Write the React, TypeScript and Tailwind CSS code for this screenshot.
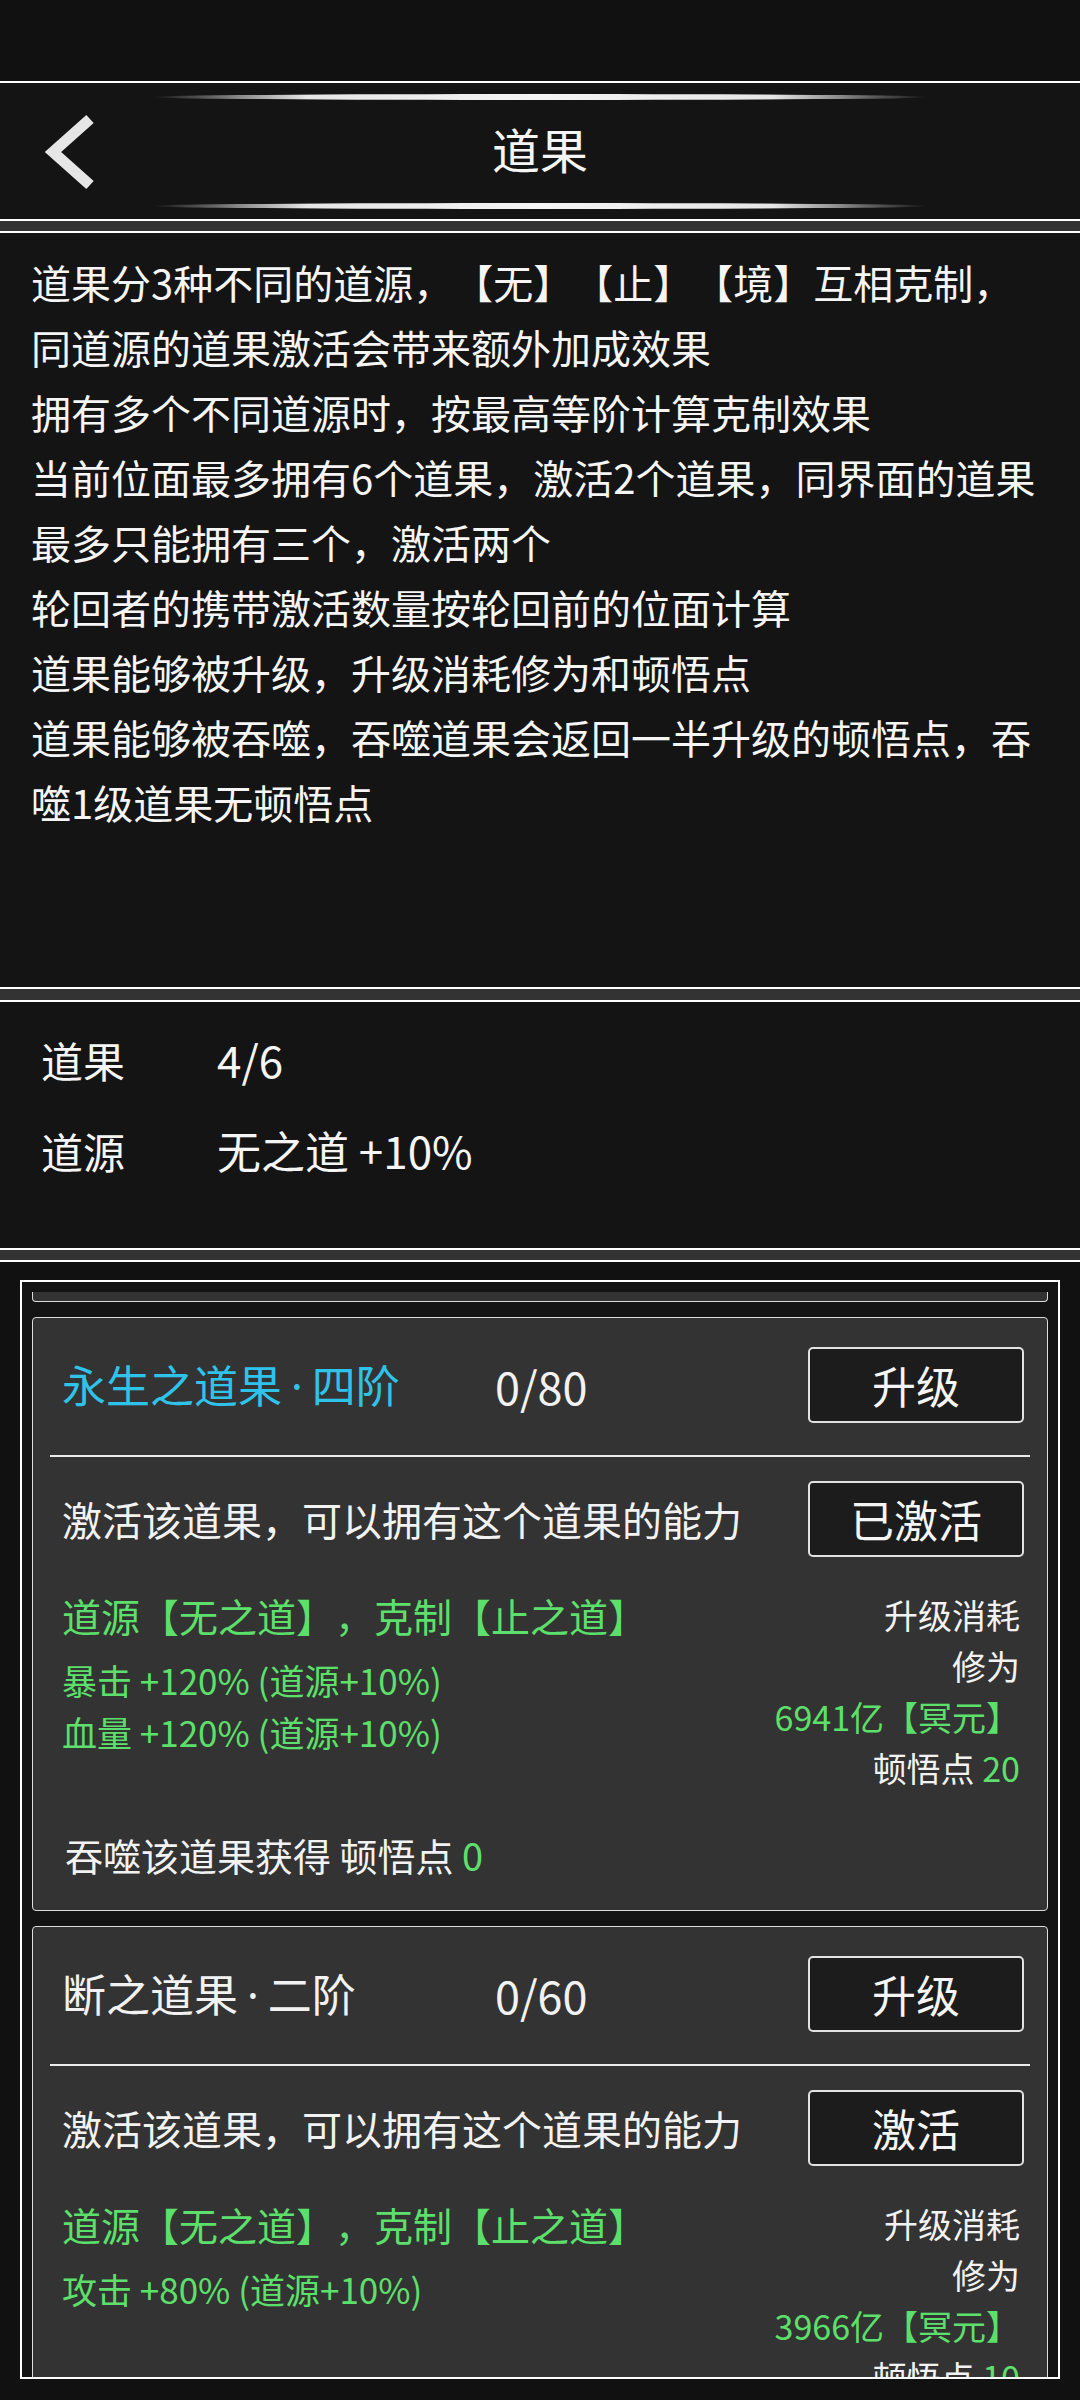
import React from 'react';

const GREEN = 'text-[#5de06b]';

type Card = {
  name: string;
  tier: string;
  titleCls: string;
  count: string;
  action: string;
  stats: string[];
  cost: string;
  insight: string;
  swallow?: string;
};

const cards: Card[] = [
  {
    name: '永生之道果',
    tier: '四阶',
    titleCls: 'text-[#2fc3ea]',
    count: '0/80',
    action: '已激活',
    stats: ['暴击 +120% (道源+10%)', '血量 +120% (道源+10%)'],
    cost: '6941亿【冥元】',
    insight: '20',
    swallow: '0',
  },
  {
    name: '断之道果',
    tier: '二阶',
    titleCls: 'text-[#f2f2f2]',
    count: '0/60',
    action: '激活',
    stats: ['攻击 +80% (道源+10%)'],
    cost: '3966亿【冥元】',
    insight: '10',
    swallow: '0',
  },
];

const rules = [
  '道果分3种不同的道源，【无】【止】【境】互相克制，',
  '同道源的道果激活会带来额外加成效果',
  '拥有多个不同道源时，按最高等阶计算克制效果',
  '当前位面最多拥有6个道果，激活2个道果，同界面的道果',
  '最多只能拥有三个，激活两个',
  '轮回者的携带激活数量按轮回前的位面计算',
  '道果能够被升级，升级消耗修为和顿悟点',
  '道果能够被吞噬，吞噬道果会返回一半升级的顿悟点，吞',
  '噬1级道果无顿悟点',
];

function GlowLine() {
  return (
    <div className="mx-auto h-[6px] w-[778px] rounded-[50%] bg-[linear-gradient(to_right,transparent,#5a5a5a_7%,#e6e6e6_20%,#f4f4f4_50%,#e6e6e6_80%,#5a5a5a_93%,transparent)]" />
  );
}

function Button({ label }: { label: string }) {
  return (
    <div className="ml-auto flex h-[76px] w-[216px] shrink-0 items-center justify-center rounded-[5px] border-2 border-[#e2e2e2] bg-[#1c1c1c] text-[44px] leading-none text-[#f5f5f5]">
      {label}
    </div>
  );
}

function FruitCard({ card }: { card: Card }) {
  return (
    <div className="shrink-0 rounded-[4px] border border-[#dcdcdc] bg-[#333333]">
      {/* title row */}
      <div className="flex items-center pl-[29px] pr-[23px] pt-[29px]">
        <div className={`w-[433px] text-[44px] leading-none ${card.titleCls}`}>
          {card.name}
          <span className="px-[9px] font-['Noto_Sans',sans-serif]">·</span>
          {card.tier}
        </div>
        <div className="text-[45px] leading-none text-[#f2f2f2]">{card.count}</div>
        <Button label="升级" />
      </div>

      <div className="mx-[17px] mt-[32px] h-[2px] bg-[#ececec]" />

      {/* activate row */}
      <div className="mt-[24px] flex items-center pl-[29px] pr-[23px]">
        <div className="text-[40px] leading-none text-[#f2f2f2]">激活该道果，可以拥有这个道果的能力</div>
        <Button label={card.action} />
      </div>

      {/* effects + cost */}
      <div className="mt-[32px] flex items-start justify-between pl-[29px] pr-[27px]">
        <div>
          <div className={`text-[39px] leading-[52px] ${GREEN}`}>道源【无之道】，克制【止之道】</div>
          <div className="mt-[13px]">
            {card.stats.map((s) => (
              <div key={s} className={`text-[35px] leading-[52px] ${GREEN}`}>
                {s}
              </div>
            ))}
          </div>
        </div>
        <div className="text-right text-[34px] leading-[51px] text-[#f2f2f2]">
          <div>升级消耗</div>
          <div>修为</div>
          <div className={GREEN}>{card.cost}</div>
          <div>
            顿悟点 <span className={GREEN}>{card.insight}</span>
          </div>
        </div>
      </div>

      {card.swallow !== undefined && (
        <div className="mt-[34px] pb-[27px] pl-[32px] text-[38px] leading-[56px] text-[#f2f2f2]">
          吞噬该道果获得 顿悟点 <span className={GREEN}>{card.swallow}</span>
        </div>
      )}
    </div>
  );
}

export default function App() {
  return (
    <div className="flex h-[2400px] w-[1080px] flex-col overflow-hidden bg-[#111111] font-['Noto_Sans_CJK_SC',sans-serif] text-[#f2f2f2] [text-spacing-trim:space-all]">
      {/* status area */}
      <div className="h-[81px] shrink-0 bg-[#111111]" />

      {/* header */}
      <div className="flex h-[140px] shrink-0 flex-col border-y-2 border-white bg-[#141414] pb-[10px] pt-[11px]">
        <GlowLine />
        <div className="grid flex-1 grid-cols-[1fr_auto_1fr] items-center">
          <div className="pl-[40px]">
            <svg width="60" height="90" viewBox="0 0 60 90" fill="none">
              <path d="M50 12 L13 45 L50 78" stroke="#e6e6e6" strokeWidth="11" strokeLinejoin="miter" />
            </svg>
          </div>
          <div className="-mt-[8px] text-[48px] leading-none text-[#f5f5f5]">道果</div>
          <div />
        </div>
        <GlowLine />
      </div>

      <div className="h-[10px] shrink-0 bg-[#333333]" />

      {/* rules */}
      <div className="h-[758px] shrink-0 border-y-2 border-white bg-[#141414] pl-[31px] pt-[17px]">
        {rules.map((r) => (
          <div key={r} className="whitespace-nowrap text-[40px] leading-[65px] text-[#f5f5f5]">
            {r}
          </div>
        ))}
      </div>

      <div className="h-[11px] shrink-0 bg-[#333333]" />

      {/* summary */}
      <div className="h-[250px] shrink-0 border-y-2 border-white bg-[#141414] pl-[41px] pt-[12px]">
        <div className="grid grid-cols-[176px_1fr] text-[42px] leading-[91px] text-[#f5f5f5]">
          <div>道果</div>
          <div className="text-[44px]">4/6</div>
          <div>道源</div>
          <div className="text-[44px]">无之道 +10%</div>
        </div>
      </div>

      <div className="h-[10px] shrink-0 bg-[#333333]" />

      {/* fruit list */}
      <div className="flex min-h-0 flex-1 flex-col border-t-2 border-white bg-[#111111] px-[20px] pb-[21px] pt-[18px]">
        <div className="flex min-h-0 flex-1 flex-col border-2 border-white bg-[#141414] px-[10px] pt-[10px]">
          <div className="flex min-h-0 flex-1 flex-col gap-[15px] overflow-hidden">
            <div className="h-[10px] shrink-0 rounded-b-[4px] border-x border-b border-[#dcdcdc] bg-[#333333]" />
            {cards.map((c) => (
              <FruitCard key={c.name} card={c} />
            ))}
          </div>
        </div>
      </div>
    </div>
  );
}
